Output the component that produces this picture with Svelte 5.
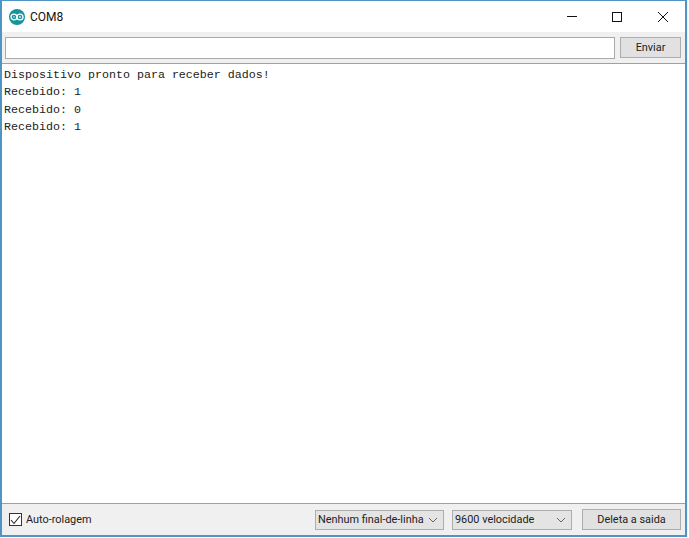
<script lang="ts">
	const lines = ['Dispositivo pronto para receber dados!', 'Recebido: 1', 'Recebido: 0', 'Recebido: 1'];
</script>

<div class="window">
	<header class="titlebar">
		<svg class="logo" width="16" height="16" viewBox="0 0 16 16">
			<circle cx="8" cy="8" r="8" fill="#17939b" />
			<ellipse cx="5" cy="8" rx="3" ry="2.9" fill="none" stroke="#fff" stroke-width="1.3" />
			<ellipse cx="11" cy="8" rx="3" ry="2.9" fill="none" stroke="#fff" stroke-width="1.3" />
			<path d="M3.9 8h2.2M9.9 8h2.2M11 6.9v2.2" stroke="#fff" stroke-width="0.8" />
		</svg>
		<span class="title">COM8</span>
		<div class="controls">
			<svg width="12" height="12" viewBox="0 0 12 12"><path d="M2 5.5h10" stroke="#111" /></svg>
			<svg width="12" height="12" viewBox="0 0 12 12"><rect x="1.5" y="1.5" width="9" height="9" fill="none" stroke="#111" /></svg>
			<svg width="12" height="12" viewBox="0 0 12 12"><path d="M1 1l10 10M11 1L1 11" stroke="#111" /></svg>
		</div>
	</header>

	<div class="sendbar">
		<input class="field" type="text" />
		<button class="btn send">Enviar</button>
	</div>

	<main class="output">
		{#each lines as line}
			<div>{line}</div>
		{/each}
	</main>

	<footer class="statusbar">
		<label class="autoscroll">
			<span class="check">
				<svg width="11" height="10" viewBox="0 0 11 10"><path d="M1 5l3 3.5L10 1" fill="none" stroke="#222" stroke-width="1.1" /></svg>
			</span>
			Auto-rolagem
		</label>
		<div class="select ending">
			<span>Nenhum final-de-linha</span>
			<svg width="10" height="6" viewBox="0 0 10 6"><path d="M1 1l4 4 4-4" fill="none" stroke="#666" /></svg>
		</div>
		<div class="select speed">
			<span>9600 velocidade</span>
			<svg width="10" height="6" viewBox="0 0 10 6"><path d="M1 1l4 4 4-4" fill="none" stroke="#666" /></svg>
		</div>
		<button class="btn clear">Deleta a saida</button>
	</footer>
</div>

<style>
	:global(body) {
		margin: 0;
		background: #fff;
	}
	.window {
		box-sizing: border-box;
		width: 687px;
		height: 537px;
		border: 1px solid #4f94c4;
		border-left-width: 2px;
		border-right-width: 2px;
		border-bottom-width: 2px;
		display: flex;
		flex-direction: column;
		font-family: Roboto, 'Noto Sans', sans-serif;
		font-size: 10.9px;
		color: #222;
		box-shadow: 0 1px 1px #b9b9b9;
	}
	.titlebar {
		height: 31px;
		flex: none;
		display: flex;
		align-items: center;
		background: #fff;
		padding-left: 7px;
	}
	.title {
		margin-left: 5px;
		font-size: 12px;
		color: #111;
	}
	.controls {
		margin-left: auto;
		display: flex;
		gap: 34px;
		padding-right: 16px;
	}
	.sendbar {
		height: 32px;
		flex: none;
		display: flex;
		gap: 5px;
		align-items: flex-start;
		box-sizing: border-box;
		padding: 5px 4px 0 3px;
		background: #f0f0f0;
		border-bottom: 1px solid #a0a0a0;
	}
	.field {
		box-sizing: border-box;
		width: 610px;
		height: 22px;
		border: 1px solid #a9a9a9;
		background: #fff;
		padding: 0;
	}
	.btn {
		box-sizing: border-box;
		height: 21px;
		border: 1px solid #adadad;
		background: #e1e1e1;
		font: inherit;
		color: #222;
		padding: 0;
	}
	.send {
		width: 61px;
	}
	.output {
		flex: 1;
		box-sizing: border-box;
		background: #fff;
		padding: 2.5px 0 0 2px;
		font-family: 'Liberation Mono', monospace;
		font-size: 11.67px;
		line-height: 17.5px;
		color: #222;
		min-height: 0;
	}
	.statusbar {
		height: 32px;
		flex: none;
		box-sizing: border-box;
		display: flex;
		align-items: center;
		background: #f0f0f0;
		border-top: 1px solid #a0a0a0;
		padding: 0 4px 0 7px;
	}
	.autoscroll {
		display: flex;
		align-items: center;
		gap: 4px;
		margin-right: auto;
	}
	.check {
		box-sizing: border-box;
		width: 13px;
		height: 13px;
		border: 1px solid #333;
		background: #fff;
		display: flex;
		align-items: center;
		justify-content: center;
	}
	.select {
		box-sizing: border-box;
		height: 20px;
		display: flex;
		align-items: center;
		justify-content: space-between;
		border: 1px solid #adadad;
		background: #e4e4e4;
		padding: 0 5px 0 2px;
		margin-right: 8px;
		white-space: nowrap;
	}
	.ending {
		width: 129px;
	}
	.speed {
		width: 120px;
		margin-right: 10px;
	}
	.clear {
		width: 99px;
	}
</style>
